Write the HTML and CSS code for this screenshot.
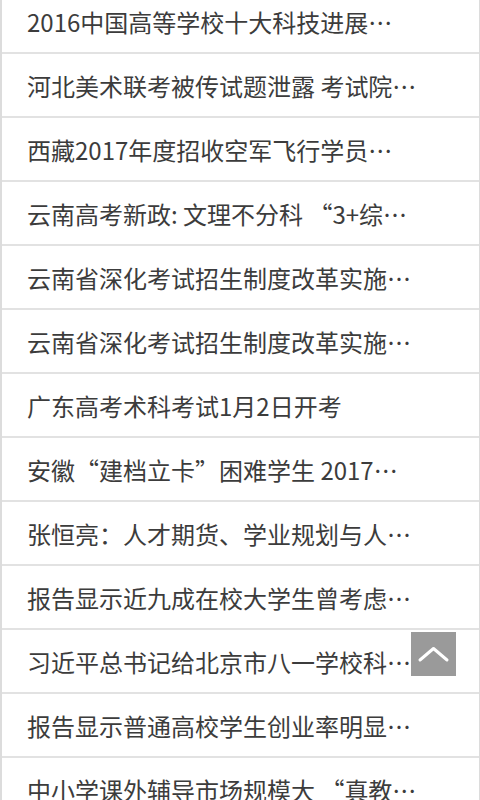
FILE: index.html
```html
<!DOCTYPE html>
<html lang="zh-CN">

<head>
    <meta charset="UTF-8">
    <meta name="viewport" content="width=device-width, initial-scale=1.0">
    <title>资讯列表</title>
    <link rel="stylesheet" href="styles.css">
</head>

<body>
    <ul class="news">
        <li class="news__item"><a class="news__link" href="#">2016中国高等学校十大科技进展…</a></li>
        <li class="news__item"><a class="news__link" href="#">河北美术联考被传试题泄露 考试院…</a></li>
        <li class="news__item"><a class="news__link" href="#">西藏2017年度招收空军飞行学员…</a></li>
        <li class="news__item"><a class="news__link" href="#">云南高考新政: 文理不分科 “3+综…</a></li>
        <li class="news__item"><a class="news__link" href="#">云南省深化考试招生制度改革实施…</a></li>
        <li class="news__item"><a class="news__link" href="#">云南省深化考试招生制度改革实施…</a></li>
        <li class="news__item"><a class="news__link" href="#">广东高考术科考试1月2日开考</a></li>
        <li class="news__item"><a class="news__link" href="#">安徽“建档立卡”困难学生 2017…</a></li>
        <li class="news__item"><a class="news__link" href="#">张恒亮：人才期货、学业规划与人…</a></li>
        <li class="news__item"><a class="news__link" href="#">报告显示近九成在校大学生曾考虑…</a></li>
        <li class="news__item"><a class="news__link" href="#">习近平总书记给北京市八一学校科…</a></li>
        <li class="news__item"><a class="news__link" href="#">报告显示普通高校学生创业率明显…</a></li>
        <li class="news__item"><a class="news__link" href="#">中小学课外辅导市场规模大 “真教…</a></li>
    </ul>

    <a class="to-top" href="#">
        <svg width="45" height="44" viewBox="0 0 45 44">
            <path d="M9 28 L22.5 16.5 L36 28" fill="none" stroke="#ffffff" stroke-width="3" stroke-linecap="round" stroke-linejoin="round"/>
        </svg>
    </a>
</body>

</html>
```

FILE: styles.css
```css
* {
    box-sizing: border-box;
}

body {
    margin: 0;
    padding: 0;
    background-color: #ffffff;
    font-family: "Noto Sans CJK SC", "Noto Sans", sans-serif;
}

.news {
    list-style: none;
    margin: -10px 0 0;
    padding: 0;
    border-left: 2px solid #dcdcdc;
    border-right: 1px solid #dcdcdc;
}

.news__item {
    height: 64px;
    border-bottom: 2px solid #e2e2e2;
    display: flex;
    align-items: center;
    padding: 0 40px 0 25px;
}

.news__link {
    display: block;
    width: 100%;
    color: #3c3c3c;
    font-size: 24px;
    text-decoration: none;
    white-space: nowrap;
    overflow: hidden;
    text-overflow: ellipsis;
}

.to-top {
    position: fixed;
    right: 24px;
    bottom: 124px;
    width: 45px;
    height: 44px;
    background-color: #9a9a9a;
    display: flex;
}
```
